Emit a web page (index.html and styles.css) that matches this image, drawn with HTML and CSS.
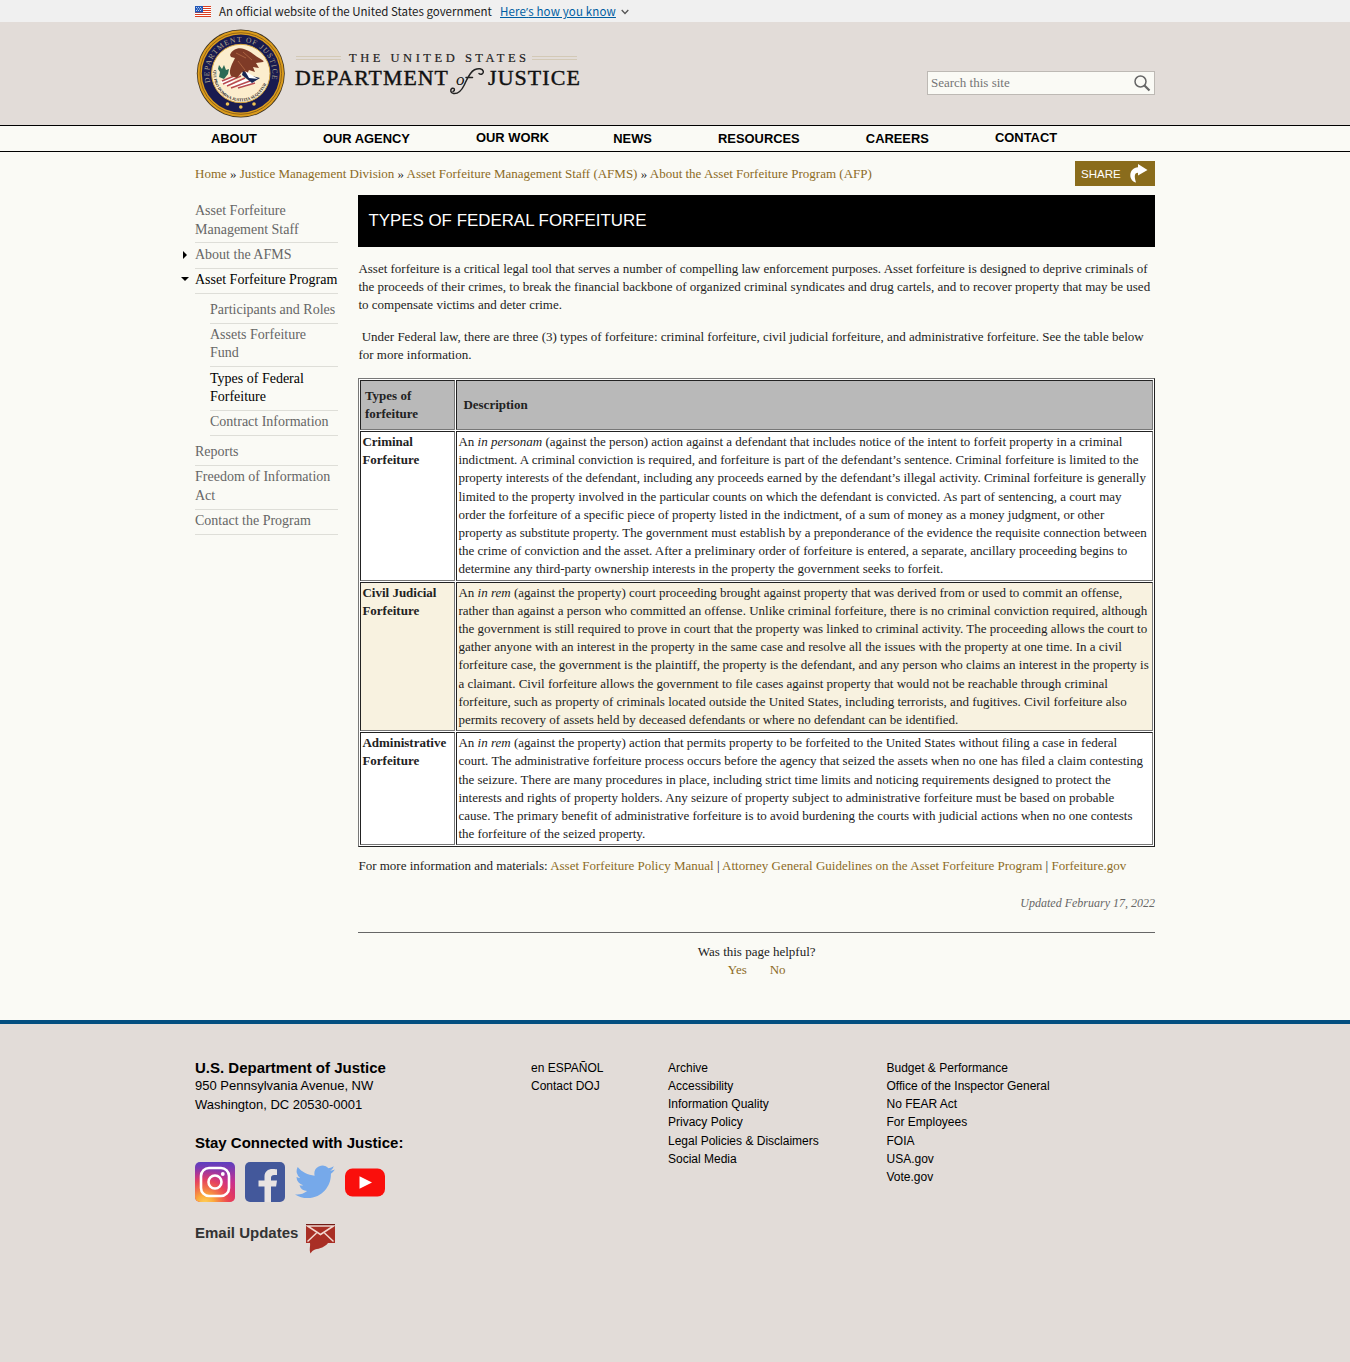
FILE: index.html
```html
<!DOCTYPE html>
<html lang="en">
<head>
<meta charset="utf-8">
<title>Types of Federal Forfeiture</title>
<link rel="stylesheet" href="styles.css">
</head>
<body>
<div class="gov-banner">
  <div class="wrap gov-row">
    <svg class="flag" width="16" height="11" viewBox="0 0 16 11"><rect width="16" height="11" fill="#fff"/><path d="M0 .5h16M0 2.5h16M0 4.5h16M0 6.5h16M0 8.5h16M0 10.5h16" stroke="#db3e1f"/><rect width="8" height="6.5" fill="#2057b8"/><path d="M1 1.5h6M2 3h5M1 4.500h6" stroke="#fff" stroke-width=".7" stroke-dasharray="1 1"/></svg>
    <span class="gov-text">An official website of the United States government</span>
    <a class="gov-link">Here<span class="quote">’</span>s how you know</a>
    <svg class="chev" width="8" height="6" viewBox="0 0 8 6"><path d="M.7 1 4 4.500 7.300 1" fill="none" stroke="#555" stroke-width="1.300"/></svg>
  </div>
</div>
<header class="site-header">
  <div class="wrap header-row">
    <svg class="logo" width="390" height="96" viewBox="195 26 390 96">
      <defs>
        <path id="ring-name" d="M210.500 82.500a31.600 31.600 0 1 1 60.600 0"/>
        <path id="ring-motto" d="M213.800 70a27.300 27.300 0 1 0 54 0"/>
      </defs>
      <circle cx="240.800" cy="73.500" r="44" fill="#3d3220"/>
      <circle cx="240.800" cy="73.500" r="43.200" fill="#dc9c1c"/>
      <circle cx="240.800" cy="73.500" r="40.800" fill="none" stroke="#7c5518" stroke-width=".8"/>
      <circle cx="240.800" cy="73.500" r="39" fill="#191b50"/>
      <circle cx="240.800" cy="73.500" r="29.200" fill="#fcedcd" stroke="#d5a540" stroke-width="1"/>
      <text class="seal-name"><textPath href="#ring-name">DEPARTMENT OF JUSTICE</textPath></text>
      <text class="seal-motto"><textPath href="#ring-motto">QUI PRO DOMINA JUSTITIA SEQUITUR</textPath></text>
      <path d="M220 82l10-5 8 1-10 8zM230 86l14-7 12 3-11 5z" fill="#fff"/>
      <path d="M222 81l17-7M223 84l18-8M227 86l18-8M231 88l19-7M238 88l17-5" stroke="#b84b50" stroke-width="1.500"/>
      <path d="M219 65l3 4 2-4 2 5 3-1-1 5-4 5-5-2 1-5-2-3z" fill="#2c6b56"/>
      <path d="M230 55c2-6 9-8 14-6 7 2 11 7 15 9 3 2 6 3 4 4l-7 1 3 5-6-1 2 5-6-2-2 4-5-2-5 6-6-2c-2-3-1-7 1-12l3-6-4-1z" fill="#7f3b27"/>
      <path d="M236 53l10 5M243 52l9 8M238 61l7 9" stroke="#aa6240" stroke-width="1" fill="none"/>
      <path d="M243 71l9 5 8 2-8 5-10-8z" fill="#172654"/>
      <path d="M245 71l5 3 8 5-9-1z" fill="#fff"/>
      <g fill="#f1c452"><circle cx="227.500" cy="104" r="1.800"/><circle cx="240.800" cy="107" r="1.800"/><circle cx="254" cy="104" r="1.800"/></g>
      <path d="M296 56.500h45M296 59.500h45M532 56.500h45M532 59.500h45" stroke="#d3c9b6" stroke-width="1"/>
      <text class="logo-small" x="349" y="61.800" textLength="177">THE UNITED STATES</text>
      <text class="logo-big" x="295" y="85" textLength="154" lengthAdjust="spacingAndGlyphs">DEPARTMENT</text>
      <text class="logo-big" x="488" y="85" textLength="93" lengthAdjust="spacingAndGlyphs">JUSTICE</text>
      <text class="logo-of" x="456" y="85">o</text>
      <path d="M453 91.500c2.500-1 1.500-4-.8-3.200-2.200 1-2 4.700 1.300 5.200 4.500.6 8-3 10.500-8 2.800-5.700 5.500-13.500 10.500-15.800 4-1.800 8-1.200 8.800 1.600.5 2.500-2.500 4-4.300 2.200M466 77.500h6.500" fill="none" stroke="#222" stroke-width="1.500" stroke-linecap="round"/>
    </svg>
    <div class="search">
      <span>Search this site</span>
      <svg width="18" height="18" viewBox="0 0 18 18"><circle cx="7.500" cy="7.500" r="5.500" fill="none" stroke="#666" stroke-width="1.500"/><path d="M11.500 11.500l5 5" stroke="#666" stroke-width="2.200"/></svg>
    </div>
  </div>
</header>
<nav class="main-nav">
  <div class="wrap nav-row">
    <a>ABOUT</a><a>OUR AGENCY</a><a class="raised">OUR WORK</a><a class="news">NEWS</a><a>RESOURCES</a><a>CAREERS</a><a class="raised">CONTACT</a>
  </div>
</nav>
<div class="wrap crumbs-row">
  <div class="crumbs"><a>Home</a> » <a>Justice Management Division</a> » <a>Asset Forfeiture Management Staff (AFMS)</a> » <a>About the Asset Forfeiture Program (AFP)</a></div>
  <div class="share"><span>SHARE</span><svg width="18" height="20" viewBox="0 0 18 20"><path d="M8 0l9.500 6L8 11.500V8.800C4.800 9 3.800 11.500 6 18.500 3 18 .3 15 .3 11.500.3 6.500 3.500 3.500 8 3.200z" fill="#fff"/></svg></div>
</div>
<div class="wrap body-row">
  <ul class="side">
    <li>Asset Forfeiture Management Staff</li>
    <li class="closed">About the AFMS</li>
    <li class="open active">Asset Forfeiture Program</li>
    <li class="group">
      <ul class="sub">
        <li>Participants and Roles</li>
        <li>Assets Forfeiture Fund</li>
        <li class="active">Types of Federal Forfeiture</li>
        <li>Contract Information</li>
      </ul>
    </li>
    <li>Reports</li>
    <li>Freedom of Information Act</li>
    <li>Contact the Program</li>
  </ul>
  <main class="content">
    <h1>TYPES OF FEDERAL FORFEITURE</h1>
    <p>Asset forfeiture is a critical legal tool that serves a number of compelling law enforcement purposes. Asset forfeiture is designed to deprive criminals of the proceeds of their crimes, to break the financial backbone of organized criminal syndicates and drug cartels, and to recover property that may be used to compensate victims and deter crime.</p>
    <p>&nbsp;Under Federal law, there are three (3) types of forfeiture: criminal forfeiture, civil judicial forfeiture, and administrative forfeiture. See the table below for more information.</p>
    <table class="types">
      <tr class="head"><th class="name">Types of forfeiture</th><th class="desc">Description</th></tr>
      <tr><td><b>Criminal Forfeiture</b></td><td>An <i>in personam</i> (against the person) action against a defendant that includes notice of the intent to forfeit property in a criminal indictment. A criminal conviction is required, and forfeiture is part of the defendant’s sentence. Criminal forfeiture is limited to the property interests of the defendant, including any proceeds earned by the defendant’s illegal activity. Criminal forfeiture is generally limited to the property involved in the particular counts on which the defendant is convicted. As part of sentencing, a court may order the forfeiture of a specific piece of property listed in the indictment, of a sum of money as a money judgment, or other property as substitute property. The government must establish by a preponderance of the evidence the requisite connection between the crime of conviction and the asset. After a preliminary order of forfeiture is entered, a separate, ancillary proceeding begins to determine any third-party ownership interests in the property the government seeks to forfeit.</td></tr>
      <tr class="tint"><td><b>Civil Judicial Forfeiture</b></td><td>An <i>in rem</i> (against the property) court proceeding brought against property that was derived from or used to commit an offense, rather than against a person who committed an offense. Unlike criminal forfeiture, there is no criminal conviction required, although the government is still required to prove in court that the property was linked to criminal activity. The proceeding allows the court to gather anyone with an interest in the property in the same case and resolve all the issues with the property at one time. In a civil forfeiture case, the government is the plaintiff, the property is the defendant, and any person who claims an interest in the property is a claimant. Civil forfeiture allows the government to file cases against property that would not be reachable through criminal forfeiture, such as property of criminals located outside the United States, including terrorists, and fugitives. Civil forfeiture also permits recovery of assets held by deceased defendants or where no defendant can be identified.</td></tr>
      <tr class="admin"><td><b>Administrative Forfeiture</b></td><td>An <i>in rem</i> (against the property) action that permits property to be forfeited to the United States without filing a case in federal court. The administrative forfeiture process occurs before the agency that seized the assets when no one has filed a claim contesting the seizure. There are many procedures in place, including strict time limits and noticing requirements designed to protect the interests and rights of property holders. Any seizure of property subject to administrative forfeiture must be based on probable cause. The primary benefit of administrative forfeiture is to avoid burdening the courts with judicial actions when no one contests the forfeiture of the seized property.</td></tr>
    </table>
    <p class="more">For more information and materials: <a>Asset Forfeiture Policy Manual</a> | <a>Attorney General Guidelines on the Asset Forfeiture Program</a> | <a>Forfeiture.gov</a></p>
    <p class="updated">Updated February 17, 2022</p>
    <div class="helpful">
      <div>Was this page helpful?</div>
      <div class="answers"><a>Yes</a><a>No</a></div>
    </div>
  </main>
</div>
<footer>
  <div class="wrap foot-row">
    <div class="foot-main">
      <div class="foot-h">U.S. Department of Justice</div>
      <div>950 Pennsylvania Avenue, NW</div>
      <div>Washington, DC 20530-0001</div>
      <div class="foot-h stay">Stay Connected with Justice:</div>
      <div class="social">
        <svg width="40" height="40" viewBox="0 0 40 40"><defs><linearGradient id="ig" x1="0" y1="0" x2="0" y2="1"><stop offset="0" stop-color="#5b3fc0"/><stop offset=".5" stop-color="#c8308f"/><stop offset="1" stop-color="#e8344f"/></linearGradient><radialGradient id="glow" cx=".25" cy="1.050" r=".9"><stop offset="0" stop-color="#ffd45b"/><stop offset=".25" stop-color="#fbaa3c"/><stop offset=".65" stop-color="#ee4a50" stop-opacity=".8"/><stop offset="1" stop-color="#d02e88" stop-opacity="0"/></radialGradient></defs><rect width="40" height="40" rx="5" fill="url(#ig)"/><rect width="40" height="40" rx="5" fill="url(#glow)"/><g fill="none" stroke="#fff" stroke-width="2.600"><rect x="6" y="6" width="28" height="28" rx="8"/><circle cx="20" cy="20" r="6.500"/></g><circle cx="27.800" cy="12" r="1.900" fill="#fff"/></svg>
        <svg width="40" height="40" viewBox="0 0 40 40"><rect width="40" height="40" rx="5" fill="#43589b"/><path d="M19.500 40V24.500H13.500v-6h6v-4c0-5 3.500-7.500 8-7.500 2.500 0 4.500.3 4.500.3v5.700h-2.800c-2.500 0-3.200 1.400-3.200 2.900v2.600h6l-.9 6H26v15.500z" fill="#e8e3e2"/></svg>
        <svg width="40" height="40" viewBox="0 0 24 24"><path transform="translate(0 -.1)" d="M23.950 4.570a10 10 0 0 1-2.820.77 4.960 4.960 0 0 0 2.160-2.720c-.95.560-2 .96-3.130 1.180a4.920 4.920 0 0 0-8.380 4.480C7.690 8.100 4.070 6.130 1.640 3.160a4.920 4.920 0 0 0 1.520 6.570 4.900 4.900 0 0 1-2.230-.61v.06a4.920 4.920 0 0 0 3.950 4.830 5 5 0 0 1-2.210.08 4.940 4.940 0 0 0 4.600 3.420A9.870 9.870 0 0 1 0 19.540a14 14 0 0 0 7.550 2.210c9.050 0 14-7.500 14-13.980 0-.21 0-.42-.02-.63a9.940 9.940 0 0 0 2.420-2.570z" fill="#76a9ea"/></svg>
        <svg width="40" height="40" viewBox="0 0 40 40"><rect y="6.500" width="40" height="28" rx="7.500" fill="#fa0f0c"/><path d="M14.500 14.300v12.500l12.500-6.200z" fill="#fff"/></svg>
      </div>
      <div class="email"><span>Email Updates</span><svg width="29" height="30" viewBox="0 0 29 30"><path d="M0 0h29v19h-7c-3 4-8 5.500-13 6.500-2 .8-3.500 2-4.500 4-1.500-4 0-7-.5-10.500H0z" fill="#a92f25"/><path d="M0 0h29v2.500H0z" fill="#721b16"/><path d="M1.500 2h26L14.500 10.500zM1.500 17.500l9-8.500M27.500 17.500l-9-8.500" fill="none" stroke="#f2d8d0" stroke-width="1.500"/></svg></div>
    </div>
    <div class="links first"><a>en ESPAÑOL</a><a>Contact DOJ</a></div>
    <div class="links second"><a>Archive</a><a>Accessibility</a><a>Information Quality</a><a>Privacy Policy</a><a>Legal Policies &amp; Disclaimers</a><a>Social Media</a></div>
    <div class="links"><a>Budget &amp; Performance</a><a>Office of the Inspector General</a><a>No FEAR Act</a><a>For Employees</a><a>FOIA</a><a>USA.gov</a><a>Vote.gov</a></div>
  </div>
</footer>
</body>
</html>
```
FILE: styles.css
```css
* { box-sizing: border-box; }
body {
  margin: 0;
  background: #fafaf5;
  color: #222;
  font: 13px/18.2px "Liberation Serif", "Times New Roman", serif;
}
.wrap { width: 960px; margin: 0 auto; }
a { color: #8c6b1f; }

.gov-banner { height: 22px; background: #f0f0f0; }
.gov-row {
  display: flex;
  align-items: center;
  height: 22px;
  font-family: "Noto Sans CJK SC", "Open Sans", sans-serif;
  font-size: 11.500px;
  color: #1b1b1b;
  white-space: nowrap;
}
.flag { margin-right: 8px; }
.gov-text { width: 273px; margin-right: 8px; }
.gov-link { margin-top: 1px; letter-spacing: .15px; color: #005ea2; text-decoration: underline; }
.quote { font-family: "Open Sans", sans-serif; line-height: 1; }
.chev { margin: 2px 0 0 5px; }

.site-header { height: 103px; background: #e2dcd8; }
.header-row { display: flex; justify-content: space-between; }
.logo { margin-top: 4px; }
.seal-name { font: 7.500px "Liberation Serif", serif; letter-spacing: 1.100px; fill: #b5a98e; }
.seal-motto { font: bold 4.200px "Liberation Serif", serif; fill: #282828; }
.logo-small { font: 12.500px "Liberation Serif", serif; fill: #222; stroke: #222; stroke-width: .2px; }
.logo-big { font: 20px "Liberation Serif", serif; letter-spacing: 1px; fill: #111; stroke: #111; stroke-width: .4px; }
.logo-of { font: italic 17px "Liberation Serif", serif; fill: #111; }
.search {
  display: flex;
  justify-content: space-between;
  align-items: center;
  width: 228px;
  height: 24px;
  margin-top: 49px;
  padding: 0 3px;
  border: 1px solid #bdb9b4;
  background: #fafaf5;
  color: #757575;
}

.main-nav { height: 27px; border-top: 1px solid #000; border-bottom: 1px solid #000; }
.nav-row {
  display: flex;
  gap: 66.150px;
  padding: 4px 16px 0;
  font: bold 12.900px/18px "Liberation Sans", Arial, sans-serif;
  white-space: nowrap;
}
.nav-row a { color: #000; }
.nav-row .raised { margin-top: -1px; }
.nav-row .news { margin-left: -2px; }

.crumbs-row { display: flex; justify-content: space-between; height: 43px; padding-top: 9px; }
.crumbs { padding-top: 4px; }
.share {
  display: flex;
  justify-content: space-between;
  align-items: center;
  width: 80px;
  height: 25px;
  padding: 0 7px 0 6px;
  background: #8a6c1c;
  color: #fff;
  font: 11.500px "Liberation Sans", Arial, sans-serif;
}

.body-row { display: flex; justify-content: space-between; }
.side, .sub { margin: 0; padding: 0; list-style: none; }
.side { width: 142.500px; padding-top: 5px; font-size: 14px; color: #666; }
.side li { padding: 2.300px 0 3.700px; border-bottom: 1px solid #deded8; }
.side .group { padding: 5px 0 5px 15px; border: 0; }
.side .active { color: #000; }
.side .closed::before, .side .open::before {
  content: "";
  float: left;
  width: 0;
  height: 0;
  border: 4px solid transparent;
}
.side .closed::before { margin: 5px 0 0 -12px; border-left: 4px solid #000; border-right-width: 0; }
.side .open::before { margin: 6px 0 0 -14px; border-top: 4px solid #000; border-bottom-width: 0; }

.content { width: 796.600px; }
h1 {
  margin: 0 0 13px;
  padding: 0 10px;
  height: 52px;
  background: #000;
  color: #fff;
  font: 16.900px/51px "Liberation Sans", Arial, sans-serif;
}
p { margin: 0 0 13.500px; }
.types {
  width: 100%;
  margin-top: -.5px;
  table-layout: fixed;
  border: 1px solid;
  border-color: #777 #222 #222 #777;
  border-spacing: 1px;
  background: #fff;
}
.types td, .types th {
  padding: 1px;
  border: 1px solid;
  border-color: #222 #777 #777 #222;
  vertical-align: top;
  text-align: left;
}
.types .admin td { padding-right: 2.500px; }
.types th { padding: 6px; background: #b9b9b9; vertical-align: middle; }
.types .name { width: 95px; padding: 6px 3.500px; }
.tint td { background: #f8f2e0; }
.more { margin: 9.600px 0 19px; }
.updated { margin: 0; text-align: right; font-size: 12px; font-style: italic; color: #666; }
.helpful { margin-top: 19.300px; padding-top: 10px; border-top: 1px solid #666; text-align: center; }
.answers { display: flex; justify-content: center; gap: 23px; }

footer {
  height: 342px;
  margin-top: 40.700px;
  border-top: 4px solid #034f80;
  background: #e2dcd8;
  color: #000;
  font-family: "Liberation Sans", Arial, sans-serif;
}
.foot-row { display: flex; padding-top: 35px; }
.foot-main { width: 336px; line-height: 18.500px; }
.foot-h { font-size: 15px; font-weight: bold; }
.stay { margin-top: 20px; }
.social { display: flex; gap: 10px; margin-top: 9px; }
.email { display: flex; gap: 8px; margin-top: 22px; font-size: 15px; font-weight: bold; color: #333; }
.links { display: flex; flex-direction: column; font-size: 12px; }
.links a { color: #000; }
.first { width: 137px; }
.second { width: 218.500px; }
```
